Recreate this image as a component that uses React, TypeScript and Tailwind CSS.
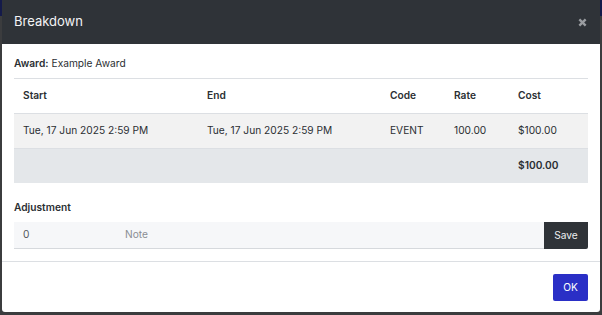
import React from "react";

const font = { fontFamily: "Inter, 'Noto Sans', sans-serif" };

export default function App() {
  return (
    <div
      className="relative w-[602px] h-[315px] bg-[#3b3c3e] overflow-hidden"
      style={font}
    >
      <div className="absolute top-0 left-0 right-0 h-[16px] bg-[#141a4a]" />
      <div className="relative ml-[2px] w-[598px] h-[312px] bg-white rounded-b-[3px] overflow-hidden flex flex-col">
        {/* Header */}
        <div className="h-[44px] bg-[#2f3338] flex items-center justify-between pl-[12px] pr-[13px] shrink-0">
          <span className="text-[13px] text-[#f3f4f5]">Breakdown</span>
          <svg width="9" height="9" viewBox="0 0 10 10" className="mt-[1px]">
            <path d="M1.5 1.5 L8.5 8.5 M8.5 1.5 L1.5 8.5" stroke="#9a9da1" strokeWidth="2.6" strokeLinecap="butt" />
          </svg>
        </div>

        {/* Body */}
        <div className="px-[12px] pt-[12px] text-[10.2px] text-[#2b2f33]">
          <div className="h-[16px] flex items-center">
            <span className="font-semibold">Award:</span>
            <span className="ml-[3px]">Example Award</span>
          </div>

          <div className="mt-[6px] border-t border-[#dcdfe3]">
            <div className="grid grid-cols-[184px_183px_64px_64px_1fr] h-[35px] items-center border-b border-[#dcdfe3] font-semibold">
              <div className="pl-[9px]">Start</div>
              <div className="pl-[9px]">End</div>
              <div className="pl-[9px]">Code</div>
              <div className="pl-[9px]">Rate</div>
              <div className="pl-[9px]">Cost</div>
            </div>
            <div className="grid grid-cols-[184px_183px_64px_64px_1fr] h-[35px] items-center bg-[#f2f2f2] border-b border-[#dcdfe3]">
              <div className="pl-[9px]">Tue, 17 Jun 2025 2:59 PM</div>
              <div className="pl-[9px]">Tue, 17 Jun 2025 2:59 PM</div>
              <div className="pl-[9px]">EVENT</div>
              <div className="pl-[9px]">100.00</div>
              <div className="pl-[9px]">$100.00</div>
            </div>
            <div className="grid grid-cols-[184px_183px_64px_64px_1fr] h-[34px] items-center bg-[#e4e7ea] font-semibold">
              <div />
              <div />
              <div />
              <div />
              <div className="pl-[9px]">$100.00</div>
            </div>
          </div>

          <div className="mt-[17px] h-[16px] flex items-center font-semibold">Adjustment</div>

          <div className="mt-[6px] flex h-[27px]">
            <div className="flex flex-1 bg-[#f6f7f9] border-b border-[#d6d9dd]">
              <div className="w-[102px] pl-[9px] flex items-center text-[#55595e]">0</div>
              <div className="flex-1 pl-[9px] flex items-center text-[#8a8e93]">Note</div>
            </div>
            <button className="w-[44px] h-[27px] bg-[#2f3338] text-[#eceef0] text-[10.2px] rounded-br-[2px] flex items-center justify-center">
              Save
            </button>
          </div>
        </div>

        {/* Footer */}
        <div className="mt-[12px] border-t border-[#dcdfe3] flex justify-end px-[12px] pt-[12px]">
          <button className="w-[35px] h-[27px] bg-[#2a2fc6] text-white text-[10.2px] rounded-[2px] flex items-center justify-center">
            OK
          </button>
        </div>
      </div>
    </div>
  );
}
